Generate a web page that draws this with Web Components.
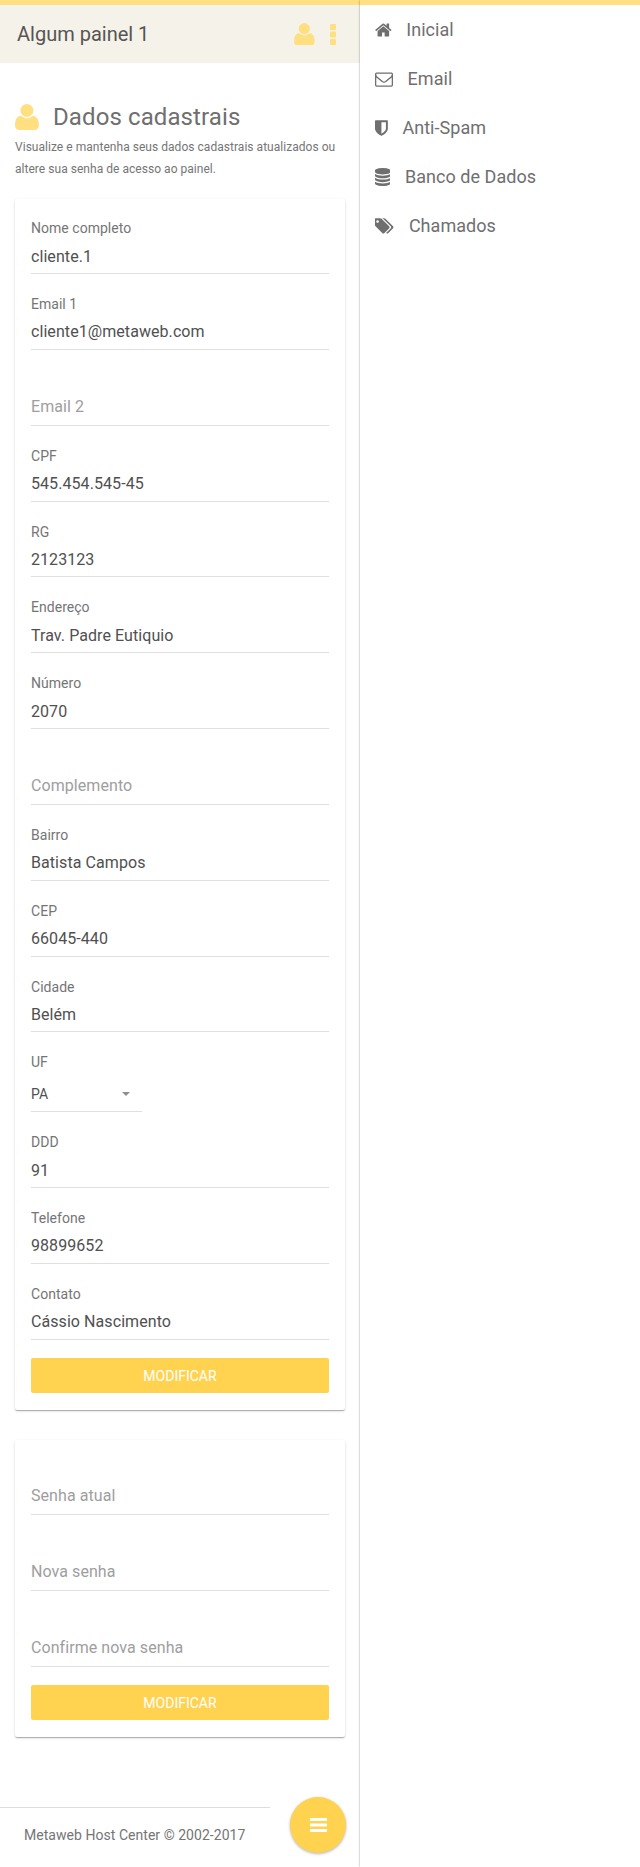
<!DOCTYPE html>
<html lang="pt-BR">
<head>
<meta charset="utf-8">
<title>Dados cadastrais</title>
<style>
html,body{margin:0;padding:0;background:#fff}
body{font-family:Roboto,"Liberation Sans",sans-serif;color:#757575}
</style>
</head>
<body>
<panel-app></panel-app>
<script>
const ICONS={
user:['192 128 1408 1536','M1600 1405q0 120-73 189.5t-194 69.5h-874q-121 0-194-69.5t-73-189.5q0-53 3.5-103.5t14-109 26.5-108.5 43-97.5 62-81 85.5-53.5 111.5-20q9 0 42 21.5t74.5 48 108 48 133.5 21.5 133.5-21.5 108-48 74.5-48 42-21.5q61 0 111.5 20t85.5 53.5 62 81 43 97.5 26.5 108.5 14 109 3.5 103.5zm-320-893q0 159-112.5 271.5t-271.5 112.5-271.5-112.5-112.5-271.5 112.5-271.5 271.5-112.5 271.5 112.5 112.5 271.5z'],
more:['0 0 6 21','M1 0h4q1 0 1 1v4q0 1-1 1h-4q-1 0-1-1v-4q0-1 1-1zM1 7.5h4q1 0 1 1v4q0 1-1 1h-4q-1 0-1-1v-4q0-1 1-1zM1 15h4q1 0 1 1v4q0 1-1 1h-4q-1 0-1-1v-4q0-1 1-1z'],
bars:['0 0 17 14','M.5 0h16q.5 0 .5.5v2q0 .5-.5.5h-16q-.5 0-.5-.5v-2q0-.5.5-.5zM.5 5.5h16q.5 0 .5.5v2q0 .5-.5.5h-16q-.5 0-.5-.5v-2q0-.5.5-.5zM.5 11h16q.5 0 .5.5v2q0 .5-.5.5h-16q-.5 0-.5-.5v-2q0-.5.5-.5z'],
home:['64 0 1664 1792','M1472 992v480q0 26-19 45t-45 19h-384v-384h-256v384h-384q-26 0-45-19t-19-45v-480q0-1 .5-3t.5-3l575-474 575 474q1 2 1 6zm223-69l-62 74q-8 9-21 11h-3q-13 0-21-7l-692-577-692 577q-12 8-24 7-13-2-21-11l-62-74q-8-10-7-23.5t11-21.5l719-599q32-26 76-26t76 26l244 204v-195q0-14 9-23t23-9h192q14 0 23 9t9 23v408l219 182q10 8 11 21.5t-7 23.5z'],
mail:['0 0 1792 1792','M1664 1504v-768q-32 36-69 66-268 206-426 338-51 43-83 67t-86.5 48.5-102.5 24.5h-2q-48 0-102.5-24.5t-86.5-48.5-83-67q-158-132-426-338-37-30-69-66v768q0 13 9.5 22.5t22.5 9.5h1472q13 0 22.5-9.5t9.5-22.5zm0-1051v-24.5l-.5-13-3-12.5-5.5-9-9-7.5-14-2.5h-1472q-13 0-22.5 9.5t-9.5 22.5q0 168 147 284 193 152 401 317 6 5 35 29.5t46 37.5 44.5 31.5 50.5 27.5 43 9h2q20 0 43-9t50.5-27.5 44.5-31.5 46-37.5 35-29.5q208-165 401-317 54-43 100.5-115.5t46.5-131.5zm128-37v1088q0 66-47 113t-113 47h-1472q-66 0-113-47t-47-113v-1088q0-66 47-113t113-47h1472q66 0 113 47t47 113z'],
shield:['256 0 1280 1792','M1344 960v-640h-448v1137q119-63 213-137 235-184 235-360zm192-768v768q0 86-33.5 170.5t-83 150-118 127.5-126.5 103-121 77.5-89.5 49.5-42.5 20q-12 6-26 6t-26-6q-16-7-42.5-20t-89.5-49.5-121-77.5-126.5-103-118-127.5-83-150-33.5-170.5v-768q0-26 19-45t45-19h1152q26 0 45 19t19 45z'],
database:['128 0 1536 1792','M896 768q237 0 443-43t325-127v170q0 69-103 128t-280 93.5-385 34.5-385-34.5-280-93.5-103-128v-170q119 84 325 127t443 43zm0 768q237 0 443-43t325-127v170q0 69-103 128t-280 93.5-385 34.5-385-34.5-280-93.5-103-128v-170q119 84 325 127t443 43zm0-384q237 0 443-43t325-127v170q0 69-103 128t-280 93.5-385 34.5-385-34.5-280-93.5-103-128v-170q119 84 325 127t443 43zm0-1152q208 0 385 34.5t280 93.5 103 128v128q0 69-103 128t-280 93.5-385 34.5-385-34.5-280-93.5-103-128v-128q0-69 103-128t280-93.5 385-34.5z'],
tags:['0 0 1920 1792','M384 448q0-53-37.5-90.5t-90.5-37.5-90.5 37.5-37.5 90.5 37.5 90.5 90.5 37.5 90.5-37.5 37.5-90.5zm1067 576q0 53-37 90l-491 492q-39 37-91 37-53 0-90-37l-715-716q-38-37-64.5-101t-26.5-117v-416q0-52 38-90t90-38h416q53 0 117 26.5t102 64.5l715 714q37 39 37 91zm384 0q0 53-37 90l-491 492q-39 37-91 37-36 0-59-14t-53-45l470-470q37-37 37-90 0-52-37-91l-715-714q-38-38-102-64.5t-117-26.5h224q53 0 117 26.5t102 64.5l715 714q37 39 37 91z']
};
function define(name,html){
  customElements.define(name,class extends HTMLElement{
    connectedCallback(){
      if(this.shadowRoot)return;
      this.attachShadow({mode:'open'}).innerHTML=typeof html==='function'?html(this):html;
    }
  });
}
define('p-icon',el=>{
  const [box,d]=ICONS[el.getAttribute('name')];
  const [,,w,h]=box.split(' ').map(Number), size=+el.getAttribute('size');
  return `<style>:host{display:block;flex:none}svg{display:block;fill:currentColor}</style>
  <svg viewBox="${box}" width="${(size*w/h).toFixed(2)}" height="${size}"><path d="${d}"/></svg>`;
});
define('p-header',`<style>
:host{display:flex;align-items:center;box-sizing:border-box;height:63px;border-top:5px solid #ffdf80;background:#f5f2e9;padding:0 24px 0 17px;color:#ffdf80}
h1{margin:0 auto 0 0;font-size:20px;line-height:28px;font-weight:400;color:#555}
p-icon+p-icon{margin-left:15px}
</style><h1><slot></slot></h1><p-icon name="user" size="22.5"></p-icon><p-icon name="more" size="21"></p-icon>`);
define('p-title',`<style>
:host{display:block;padding:0 15px}
.t{display:flex;align-items:center;gap:14.2px;margin-top:38px;height:32px;color:#ffdf80}
h2{margin:0;font-size:24px;line-height:32px;font-weight:400;letter-spacing:.1px;color:#6f6f6f}
p{margin:3px 0 0;font-size:12px;line-height:22px;letter-spacing:.035px;white-space:pre-line}
</style><div class="t"><p-icon name="user" size="26"></p-icon><h2><slot></slot></h2></div><p><slot name="sub"></slot></p>`);
define('p-card',`<style>
:host{display:flow-root;box-sizing:border-box;margin:0 15px;padding:0 16px 17px;border-radius:2px;background:#fff;box-shadow:0 1px 3px rgba(0,0,0,.14),0 1px 1px rgba(0,0,0,.14),0 2px 1px -1px rgba(0,0,0,.14)}
.f{margin-top:-.83px}
</style><div class="f"><slot></slot></div>`);
define('p-field',el=>{
  const v=el.getAttribute('value'),l=el.getAttribute('label');
  return `<style>
:host{display:block;box-sizing:border-box;height:75.845px;border-bottom:1px solid #e0e0e0;padding-top:20px}
label{display:block;height:20px;font-size:14px;line-height:20px;letter-spacing:.03px}
span{display:block;margin-top:6.4px;font-size:16px;line-height:24px;letter-spacing:.07px;color:#505050}
.ph{margin-top:25px;color:#9e9e9e}
</style>${v?`<label>${l}</label><span>${v}</span>`:`<span class="ph">${l}</span>`}`;
});
define('p-select',el=>`<style>
:host{display:block;box-sizing:border-box;height:79.8px;width:111px;border-bottom:1px solid #e0e0e0;padding-top:20px;font-size:14px;line-height:20px}
.r{display:flex;align-items:center;justify-content:space-between;padding-right:12px;margin-top:12px;color:#505050}
i{border:4px solid transparent;border-top-color:#8f8f8f;border-bottom:0}
</style><div>${el.getAttribute('label')}</div><div class="r">${el.getAttribute('value')}<i></i></div>`);
define('p-button',`<style>
:host{display:block;margin-top:18.3px;height:35px;line-height:36px;border-radius:2px;background:#ffd24f;color:#fff;font-size:14px;text-align:center;text-transform:uppercase}
</style><slot></slot>`);
define('p-footer',`<style>
:host{display:block;box-sizing:border-box;width:270px;border-top:1px solid #ddd;padding:17px 0 0 24px;font-size:14px;line-height:20px;letter-spacing:.04px}
</style><slot></slot>`);
define('p-fab',`<style>
:host{position:absolute;right:14px;bottom:14px;width:56px;height:56px;border-radius:50%;display:flex;align-items:center;justify-content:center;background:#ffd24f;color:#fff;box-shadow:0 1px 3px rgba(0,0,0,.3)}
</style><p-icon name="bars" size="14"></p-icon>`);
define('p-navitem',el=>`<style>
:host{display:flex;align-items:center;gap:14.6px;height:49px;padding-left:15px;font-size:18px;line-height:24px;letter-spacing:.03px;color:#6f6f6f}
</style><p-icon name="${el.getAttribute('icon')}" size="18"></p-icon><span><slot></slot></span>`);
define('p-nav',`<style>
:host{display:block;position:relative;border-top:5px solid #ffdf80;box-shadow:0 0 2px rgba(0,0,0,.4);background:#fff;clip-path:inset(0 0 0 -4px)}
</style><slot></slot>`);
define('panel-app',`<style>
:host{display:grid;grid-template-columns:360px 280px;height:1867px;overflow:hidden}
main{position:relative}
p-title{height:136px;display:flow-root}
p-card+p-card{margin-top:30px}
p-footer{margin-top:70px}
</style>
<main>
<p-header>Algum painel 1</p-header>
<p-title>Dados cadastrais<span slot="sub">Visualize e mantenha seus dados cadastrais atualizados ou
altere sua senha de acesso ao painel.</span></p-title>
<p-card>
<p-field label="Nome completo" value="cliente.1"></p-field>
<p-field label="Email 1" value="cliente1@metaweb.com"></p-field>
<p-field label="Email 2"></p-field>
<p-field label="CPF" value="545.454.545-45"></p-field>
<p-field label="RG" value="2123123"></p-field>
<p-field label="Endereço" value="Trav. Padre Eutiquio"></p-field>
<p-field label="Número" value="2070"></p-field>
<p-field label="Complemento"></p-field>
<p-field label="Bairro" value="Batista Campos"></p-field>
<p-field label="CEP" value="66045-440"></p-field>
<p-field label="Cidade" value="Belém"></p-field>
<p-select label="UF" value="PA"></p-select>
<p-field label="DDD" value="91"></p-field>
<p-field label="Telefone" value="98899652"></p-field>
<p-field label="Contato" value="Cássio Nascimento"></p-field>
<p-button>Modificar</p-button>
</p-card>
<p-card>
<p-field label="Senha atual"></p-field>
<p-field label="Nova senha"></p-field>
<p-field label="Confirme nova senha"></p-field>
<p-button>Modificar</p-button>
</p-card>
<p-footer>Metaweb Host Center © 2002-2017</p-footer>
<p-fab></p-fab>
</main>
<p-nav>
<p-navitem icon="home">Inicial</p-navitem>
<p-navitem icon="mail">Email</p-navitem>
<p-navitem icon="shield">Anti-Spam</p-navitem>
<p-navitem icon="database">Banco de Dados</p-navitem>
<p-navitem icon="tags">Chamados</p-navitem>
</p-nav>`);
</script>
</body>
</html>
